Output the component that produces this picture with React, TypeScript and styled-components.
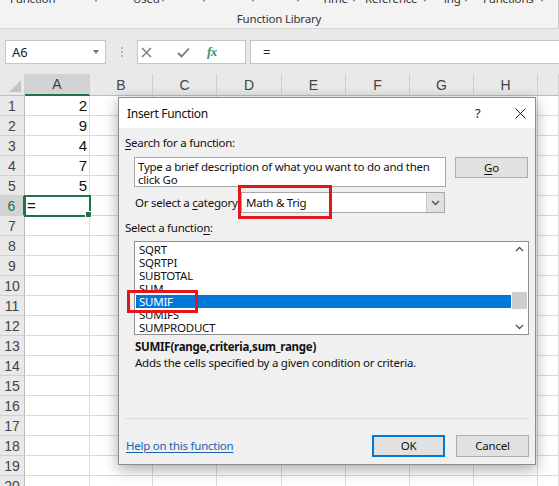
import React from 'react';
import { styled, createGlobalStyle } from 'styled-components';

const GlobalStyle = createGlobalStyle`
  html, body {
    margin: 0;
    padding: 0;
    background: #ffffff;
  }
  body {
    font-family: 'Noto Sans', 'Liberation Sans', sans-serif;
  }
`;

const UI = `'Noto Sans', 'Liberation Sans', sans-serif`;
const GRID_FONT = `'Liberation Sans', 'Noto Sans', sans-serif`;

const Page = styled.div`
  position: relative;
  width: 559px;
  height: 486px;
  overflow: hidden;
  background: #ffffff;
`;

/* ---------- ribbon ---------- */

const Ribbon = styled.div`
  height: 29px;
  background: #f3f3f3;
  border-bottom: 1px solid #d6d6d6;
  border-right: 1px solid #c8c8c8;
  box-sizing: border-box;
  width: 559px;
  overflow: hidden;
  display: flex;
  flex-direction: column;
`;

const RibbonTop = styled.div`
  display: flex;
  height: 12px;
  margin-top: -7px;
  font-family: ${UI};
  font-size: 11.5px;
  letter-spacing: -0.2px;
  line-height: 12px;
  color: #333;
  white-space: nowrap;
`;

const RibbonItem = styled.span<{ $w: number }>`
  flex: 0 0 ${(p) => p.$w}px;
  overflow: visible;
`;

const Caret = styled.span<{ $w: number }>`
  flex: 0 0 ${(p) => p.$w}px;
  display: flex;
  align-items: flex-end;
  padding-bottom: 3px;
  box-sizing: border-box;
  &::before {
    content: '';
    border-left: 2.5px solid transparent;
    border-right: 2.5px solid transparent;
    border-top: 3px solid #8a8a8a;
  }
`;

const GroupLabel = styled.div`
  text-align: center;
  font-family: ${UI};
  font-size: 11.5px;
  letter-spacing: -0.2px;
  color: #333;
  margin-top: 7px;
  line-height: 14px;
`;

/* ---------- formula bar ---------- */

const FormulaBar = styled.div`
  height: 45px;
  background: #e9e9e9;
  display: flex;
  align-items: flex-start;
  padding-top: 11px;
  padding-left: 5px;
  box-sizing: border-box;
`;

const NameBox = styled.div`
  width: 101px;
  height: 24px;
  box-sizing: border-box;
  background: #fff;
  border: 1px solid #c6c6c6;
  display: flex;
  align-items: center;
  justify-content: space-between;
  padding: 0 6px 0 6px;
  font-family: ${UI};
  font-size: 13px;
  color: #222;
`;

const SmallCaret = styled.span`
  border-left: 3.5px solid transparent;
  border-right: 3.5px solid transparent;
  border-top: 4px solid #777;
`;

const Dots = styled.div`
  width: 31px;
  height: 24px;
  display: flex;
  flex-direction: column;
  align-items: center;
  justify-content: center;
  gap: 2px;
  span {
    width: 2px;
    height: 2px;
    background: #b5b5b5;
  }
`;

const EditButtons = styled.div`
  width: 109px;
  height: 24px;
  box-sizing: border-box;
  background: #fff;
  border: 1px solid #c6c6c6;
  display: flex;
  align-items: center;
  padding-left: 3px;
  gap: 25px;
`;

const Fx = styled.span`
  margin-left: -8px;
  font-family: 'Liberation Serif', serif;
  font-style: italic;
  font-weight: bold;
  font-size: 13px;
  color: #3f8f5f;
  letter-spacing: -0.5px;
`;

const FormulaInput = styled.div`
  flex: 1;
  margin-left: 4px;
  height: 24px;
  box-sizing: border-box;
  background: #fff;
  border: 1px solid #c6c6c6;
  border-right: none;
  display: flex;
  align-items: center;
  padding-left: 12px;
  font-family: ${UI};
  font-size: 13px;
  color: #222;
`;

/* ---------- sheet ---------- */

const COLS = [25, 65, 63, 64, 65, 64, 64, 64, 64, 21];
const LETTERS = ['A', 'B', 'C', 'D', 'E', 'F', 'G', 'H', ''];
const VALUES: Record<number, string> = { 1: '2', 2: '9', 3: '4', 4: '7', 5: '5' };

const Sheet = styled.div`
  display: grid;
  grid-template-columns: ${COLS.map((c) => `${c}px`).join(' ')};
  grid-auto-rows: 20px;
  grid-template-rows: 22px;
  background: #fff;
  font-family: ${GRID_FONT};
`;

const Corner = styled.div`
  background: #e9e9e9;
  border-right: 1px solid #d0d0d0;
  border-bottom: 1px solid #bdbdbd;
  box-sizing: border-box;
  display: flex;
  align-items: flex-end;
  justify-content: flex-end;
  padding: 0 3px 3px 0;
  &::after {
    content: '';
    border-left: 12px solid transparent;
    border-bottom: 12px solid #c4c4c4;
  }
`;

const ColHead = styled.div<{ $active?: boolean }>`
  background: ${(p) => (p.$active ? '#d3d3d3' : '#e9e9e9')};
  border-right: 1px solid #d0d0d0;
  border-bottom: ${(p) => (p.$active ? '2px solid #217346' : '1px solid #bdbdbd')};
  box-sizing: border-box;
  display: flex;
  align-items: center;
  justify-content: center;
  font-size: 14px;
  color: ${(p) => (p.$active ? '#3b3b3b' : '#444')};
`;

const RowHead = styled.div<{ $active?: boolean }>`
  background: ${(p) => (p.$active ? '#d3d3d3' : '#e9e9e9')};
  border-right: ${(p) => (p.$active ? '2px solid #217346' : '1px solid #bdbdbd')};
  border-bottom: 1px solid #d0d0d0;
  box-sizing: border-box;
  display: flex;
  align-items: center;
  justify-content: center;
  font-size: 14px;
  color: ${(p) => (p.$active ? '#217346' : '#444')};
`;

const Cell = styled.div<{ $selected?: boolean }>`
  position: relative;
  border-right: 1px solid #dadada;
  border-bottom: 1px solid #dadada;
  box-sizing: border-box;
  display: flex;
  align-items: center;
  justify-content: flex-end;
  padding: 0 2px;
  font-size: 15px;
  color: #111;
  ${(p) =>
    p.$selected &&
    `
    justify-content: flex-start;
    outline: 2px solid #217346;
    outline-offset: -1px;
    z-index: 1;
    &::after {
      content: '';
      position: absolute;
      right: -3px;
      bottom: -3px;
      width: 5px;
      height: 5px;
      background: #217346;
      border: 1px solid #fff;
    }
  `}
`;

/* ---------- dialog ---------- */

const Dialog = styled.div`
  position: absolute;
  left: 118px;
  top: 97px;
  width: 418px;
  height: 368px;
  box-sizing: border-box;
  border: 1px solid #8c8c8c;
  background: #f0f0f0;
  box-shadow: 0 4px 14px rgba(0, 0, 0, 0.35);
  display: flex;
  flex-direction: column;
  font-family: ${UI};
  font-size: 11.5px;
  letter-spacing: -0.25px;
  color: #111;
  z-index: 5;
`;

const TitleBar = styled.div`
  height: 30px;
  background: #fff;
  display: flex;
  align-items: center;
  padding-left: 8px;
  font-size: 12px;
  letter-spacing: -0.3px;
`;

const TitleText = styled.div`
  flex: 1;
`;

const Help = styled.span`
  width: 24px;
  font-size: 13px;
  color: #222;
`;

const CloseBtn = styled.span`
  width: 36px;
  display: flex;
  align-items: center;
  padding-left: 16px;
  box-sizing: border-box;
`;

const Body = styled.div`
  flex: 1;
  display: flex;
  flex-direction: column;
  padding: 0 6px;
`;

const Label = styled.div<{ $mt: number }>`
  margin-top: ${(p) => p.$mt}px;
  height: 16px;
  line-height: 16px;
  white-space: nowrap;
  u {
    text-decoration: underline;
    text-underline-offset: 2px;
  }
`;

const SearchRow = styled.div`
  display: flex;
  align-items: flex-start;
  margin-top: 6px;
  padding-left: 9px;
`;

const SearchBox = styled.div`
  width: 312px;
  height: 30px;
  box-sizing: border-box;
  background: #fff;
  border: 1px solid #a8a8a8;
  padding: 3px 3px 0;
  line-height: 12.5px;
`;

const Button = styled.div<{ $w: number; $default?: boolean }>`
  width: ${(p) => p.$w}px;
  height: 22px;
  box-sizing: border-box;
  background: #e1e1e1;
  border: ${(p) => (p.$default ? '2px solid #0078d7' : '1px solid #adadad')};
  display: flex;
  align-items: center;
  justify-content: center;
  u {
    text-underline-offset: 2px;
  }
`;

const GoButton = styled(Button)`
  margin-left: 9px;
  height: 21px;
`;

const CategoryRow = styled.div`
  display: flex;
  align-items: center;
  margin-top: 5px;
  padding-left: 10px;
`;

const CategoryLabel = styled.div`
  width: 106px;
  white-space: nowrap;
  u {
    text-underline-offset: 2px;
  }
`;

const Combo = styled.div`
  position: relative;
  width: 204px;
  height: 21px;
  box-sizing: border-box;
  background: #fff;
  border: 1px solid #a8a8a8;
  display: flex;
  align-items: center;
  padding-left: 4px;
`;

const ComboText = styled.div`
  flex: 1;
`;

const ComboArrow = styled.div`
  width: 17px;
  height: 19px;
  background: #e1e1e1;
  border-left: 1px solid #c8c8c8;
  display: flex;
  align-items: center;
  justify-content: center;
`;

const Highlight = styled.div<{ $l: number; $t: number; $w: number; $h: number }>`
  position: absolute;
  left: ${(p) => p.$l}px;
  top: ${(p) => p.$t}px;
  width: ${(p) => p.$w}px;
  height: ${(p) => p.$h}px;
  box-sizing: border-box;
  border: 3px solid #e2171e;
  pointer-events: none;
  z-index: 3;
`;

const ListBox = styled.div`
  position: relative;
  margin-top: 5px;
  margin-left: 9px;
  width: 395px;
  height: 94px;
  box-sizing: border-box;
  background: #fff;
  border: 1px solid #8f8f8f;
  display: flex;
`;

const Items = styled.div`
  flex: 1;
  padding: 1px 0 0 1px;
`;

const Item = styled.div<{ $selected?: boolean }>`
  height: 13px;
  line-height: 13px;
  padding-left: 3px;
  background: ${(p) => (p.$selected ? '#0078d7' : 'transparent')};
  color: ${(p) => (p.$selected ? '#fff' : '#111')};
`;

const ScrollBar = styled.div`
  width: 17px;
  display: flex;
  flex-direction: column;
  align-items: center;
  justify-content: space-between;
  padding: 4px 0;
  box-sizing: border-box;
`;

const Thumb = styled.div`
  width: 15px;
  height: 17px;
  background: #cdcdcd;
  margin-top: 24px;
`;

const Syntax = styled.div`
  margin-top: 4px;
  margin-left: 10px;
  font-weight: bold;
  line-height: 16px;
`;

const Description = styled.div`
  margin-left: 10px;
  line-height: 16px;
`;

const Separator = styled.div`
  margin-top: auto;
  height: 1px;
  background: #dcdcdc;
`;

const Footer = styled.div`
  display: flex;
  align-items: center;
  height: 36px;
  padding-bottom: 1px;
  box-sizing: border-box;
  margin-top: 9px;
  gap: 11px;
`;

const HelpLink = styled.a`
  flex: 1;
  color: #1e5fae;
  text-decoration: underline;
  text-underline-offset: 2px;
  cursor: pointer;
  padding-left: 1px;
`;

const Chevron = ({ up }: { up?: boolean }) => (
  <svg width="9" height="6" viewBox="0 0 9 6">
    <path
      d={up ? 'M1 5 L4.5 1.5 L8 5' : 'M1 1 L4.5 4.5 L8 1'}
      fill="none"
      stroke="#555"
      strokeWidth="1.4"
    />
  </svg>
);

const TOP_ITEMS: { t: string; w: number; caret?: boolean }[] = [
  { t: 'Function', w: 84 },
  { t: '', w: 39, caret: true },
  { t: 'Used', w: 28 },
  { t: '', w: 41, caret: true },
  { t: '', w: 49, caret: true },
  { t: '', w: 45, caret: true },
  { t: '', w: 26, caret: true },
  { t: 'Time', w: 30 },
  { t: '', w: 13, caret: true },
  { t: 'Reference', w: 58 },
  { t: '', w: 21, caret: true },
  { t: 'ing', w: 20 },
  { t: '', w: 19, caret: true },
  { t: 'Functions', w: 57 },
  { t: '', w: 10, caret: true },
];

const FUNCS = ['SQRT', 'SQRTPI', 'SUBTOTAL', 'SUM', 'SUMIF', 'SUMIFS', 'SUMPRODUCT'];

const App = () => {
  const rows = Array.from({ length: 20 }, (_, i) => i + 1);
  return (
    <Page>
      <GlobalStyle />
      <Ribbon>
        <RibbonTop>
          <RibbonItem $w={10} />
          {TOP_ITEMS.map((it, i) =>
            it.caret ? <Caret key={i} $w={it.w} /> : <RibbonItem key={i} $w={it.w}>{it.t}</RibbonItem>
          )}
        </RibbonTop>
        <GroupLabel>Function Library</GroupLabel>
      </Ribbon>

      <FormulaBar>
        <NameBox>
          <span>A6</span>
          <SmallCaret />
        </NameBox>
        <Dots>
          <span />
          <span />
          <span />
        </Dots>
        <EditButtons>
          <svg width="11" height="11" viewBox="0 0 11 11">
            <path d="M1 1 L10 10 M10 1 L1 10" stroke="#777" strokeWidth="1.4" />
          </svg>
          <svg width="13" height="11" viewBox="0 0 13 11">
            <path d="M1 6 L4.5 9.5 L12 1.5" fill="none" stroke="#777" strokeWidth="1.8" />
          </svg>
          <Fx>fx</Fx>
        </EditButtons>
        <FormulaInput>=</FormulaInput>
      </FormulaBar>

      <Sheet>
        <Corner />
        {LETTERS.map((l, i) => (
          <ColHead key={i} $active={l === 'A'}>
            {l}
          </ColHead>
        ))}
        {rows.map((r) => (
          <React.Fragment key={r}>
            <RowHead $active={r === 6}>{r}</RowHead>
            {LETTERS.map((l, ci) => (
              <Cell key={ci} $selected={ci === 0 && r === 6}>
                {ci === 0 ? (r === 6 ? '=' : VALUES[r] ?? '') : ''}
              </Cell>
            ))}
          </React.Fragment>
        ))}
      </Sheet>

      <Dialog>
        <TitleBar>
          <TitleText>Insert Function</TitleText>
          <Help>?</Help>
          <CloseBtn>
            <svg width="11" height="11" viewBox="0 0 11 11">
              <path d="M0.5 0.5 L10.5 10.5 M10.5 0.5 L0.5 10.5" stroke="#222" strokeWidth="1" />
            </svg>
          </CloseBtn>
        </TitleBar>
        <Body>
          <Label $mt={7}>
            <u>S</u>earch for a function:
          </Label>
          <SearchRow>
            <SearchBox>Type a brief description of what you want to do and then click Go</SearchBox>
            <GoButton $w={73}>
              <u>G</u>o
            </GoButton>
          </SearchRow>
          <CategoryRow>
            <CategoryLabel>
              Or select a <u>c</u>ategory:
            </CategoryLabel>
            <Combo>
              <ComboText>Math &amp; Trig</ComboText>
              <ComboArrow>
                <Chevron />
              </ComboArrow>
              <Highlight $l={-4} $t={-8} $w={94} $h={34} />
            </Combo>
          </CategoryRow>
          <Label $mt={7}>
            Select a functio<u>n</u>:
          </Label>
          <ListBox>
            <Items>
              {FUNCS.map((f) => (
                <Item key={f} $selected={f === 'SUMIF'}>
                  {f}
                </Item>
              ))}
            </Items>
            <ScrollBar>
              <Chevron up />
              <Thumb />
              <Chevron />
            </ScrollBar>
            <Highlight $l={-8} $t={48} $w={71} $h={23} />
          </ListBox>
          <Syntax>SUMIF(range,criteria,sum_range)</Syntax>
          <Description>Adds the cells specified by a given condition or criteria.</Description>
          <Separator />
          <Footer>
            <HelpLink>Help on this function</HelpLink>
            <Button $w={73} $default>
              OK
            </Button>
            <Button $w={73}>Cancel</Button>
          </Footer>
        </Body>
      </Dialog>
    </Page>
  );
};

export default App;
